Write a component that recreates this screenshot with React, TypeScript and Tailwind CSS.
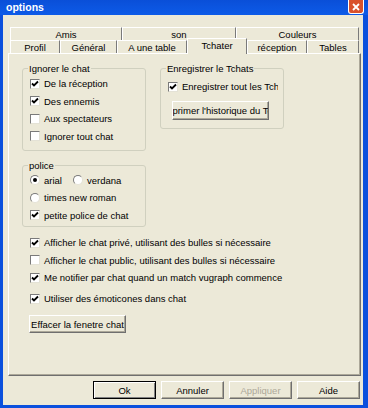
import React from "react";

const FONT = { fontFamily: '"Liberation Sans", Arial, sans-serif' };

function Check({ on }: { on?: boolean }) {
  return (
    <span className="w-[10px] h-[10px] shrink-0 bg-white border border-t-[#7a7a7a] border-l-[#7a7a7a] border-r-[#e4e2d6] border-b-[#e4e2d6] flex items-center justify-center">
      {on && (
        <svg width="8" height="8" viewBox="0 0 8 8">
          <path d="M1 3.5 L3 5.5 L7 1.5" stroke="#000" strokeWidth="1.8" fill="none" />
        </svg>
      )}
    </span>
  );
}

function Radio({ on }: { on?: boolean }) {
  return (
    <span className="w-[10px] h-[10px] shrink-0 rounded-full bg-white border border-t-[#7a7a7a] border-l-[#7a7a7a] border-r-[#e4e2d6] border-b-[#e4e2d6] flex items-center justify-center">
      {on && <span className="w-[4px] h-[4px] rounded-full bg-black" />}
    </span>
  );
}

function Row({ children, box }: { children: React.ReactNode; box: React.ReactNode }) {
  return (
    <div className="h-[17.5px] flex items-center gap-[4px] whitespace-nowrap">
      {box}
      <span>{children}</span>
    </div>
  );
}

function Group({
  title,
  className,
  children,
}: {
  title: string;
  className: string;
  children: React.ReactNode;
}) {
  return (
    <div className={"relative border border-[#d0d0bf] rounded-[3px] " + className}>
      <span className="absolute left-[5px] -top-[6px] px-[1px] bg-[#ece9d8] leading-[11px]">{title}</span>
      {children}
    </div>
  );
}

function Btn({
  children,
  className = "",
  def,
  disabled,
}: {
  children: React.ReactNode;
  className?: string;
  def?: boolean;
  disabled?: boolean;
}) {
  return (
    <div
      className={
        "flex items-center justify-center overflow-hidden whitespace-nowrap bg-[#ece9d8] " +
        (def
          ? "border border-black shadow-[inset_1px_1px_0_#fff,inset_-1px_-1px_0_#808080] "
          : "border border-t-white border-l-white border-r-[#6f6f6f] border-b-[#6f6f6f] shadow-[inset_-1px_-1px_0_#aca899] ") +
        (disabled ? "text-[#aca899] " : "") +
        className
      }
    >
      {children}
    </div>
  );
}

function Tab({ label, w, sel }: { label: string; w: string; sel?: boolean }) {
  return (
    <div
      className={
        "shrink-0 flex items-center justify-center border-t border-l border-t-white border-l-white border-r border-r-[#7a7a7a] bg-[#ece9d8] " +
        w +
        (sel ? " relative -top-[2px] h-[16px] z-10 pb-[2px]" : " h-[13px]")
      }
    >
      {label}
    </div>
  );
}

export default function App() {
  return (
    <div
      className="w-[368px] h-[408px] bg-[#0b50dd] flex flex-col text-[9.5px] text-black leading-[11px]"
      style={FONT}
    >
      <div className="h-[15px] flex items-start justify-between pl-[6px] pr-[4px] bg-[linear-gradient(#0a4fd8,#0d5be8)]">
        <span className="text-white font-bold text-[10.5px] leading-[13px] mt-[1px]">options</span>
        <div className="w-[16px] h-[14px] bg-[#d9522c] border border-t-0 border-white rounded-b-[3px] flex items-center justify-center">
          <svg width="8" height="8" viewBox="0 0 8 8">
            <path d="M1 1 L7 7 M7 1 L1 7" stroke="#fff" strokeWidth="1.8" />
          </svg>
        </div>
      </div>
      <div className="flex-1 ml-[3px] mr-[5px] mb-[3px] bg-[#ece9d8] flex flex-col">
        <div className="pl-[7px] mt-[12px] flex flex-col">
          <div className="flex h-[13px]">
            <Tab label="Amis" w="w-[112px]" />
            <Tab label="son" w="w-[114px]" />
            <Tab label="Couleurs" w="w-[123px]" />
          </div>
          <div className="flex items-start h-[13px]">
            <Tab label="Profil" w="w-[50px]" />
            <Tab label="Général" w="w-[57px]" />
            <Tab label="A une table" w="w-[70px]" />
            <Tab label="Tchater" w="w-[60px]" sel />
            <Tab label="réception" w="w-[60px]" />
            <Tab label="Tables" w="w-[52px]" />
          </div>
        </div>
        <div className="ml-[5px] w-[353px] h-[323px] border border-t-white border-l-white border-r-[#6f6f6f] border-b-[#6f6f6f] shadow-[inset_-1px_-1px_0_#aca899] pl-[13px] pt-[14px] flex flex-col">
          <div className="flex items-start">
            <Group title="Ignorer le chat" className="w-[124px] h-[83px] pt-[6px] pl-[7px]">
              <Row box={<Check on />}>De la réception</Row>
              <Row box={<Check on />}>Des ennemis</Row>
              <Row box={<Check />}>Aux spectateurs</Row>
              <Row box={<Check />}>Ignorer tout chat</Row>
            </Group>
            <Group title="Enregistrer le Tchats" className="ml-[14px] w-[124px] h-[61px] pt-[8.75px] pl-[7px]">
              <div className="w-[110px] overflow-hidden">
                <Row box={<Check on />}>Enregistrer tout les Tchats</Row>
              </div>
              <Btn className="ml-[4px] mt-[5.75px] w-[97px] h-[19px]">Supprimer l'historique du Tchat</Btn>
            </Group>
          </div>
          <Group title="police" className="mt-[14px] w-[124px] h-[62px] pt-[5.25px] pl-[7px]">
            <div className="flex">
              <div className="w-[43px]">
                <Row box={<Radio on />}>arial</Row>
              </div>
              <Row box={<Radio />}>verdana</Row>
            </div>
            <Row box={<Radio />}>times new roman</Row>
            <Row box={<Check on />}>petite police de chat</Row>
          </Group>
          <div className="pl-[8px] mt-[6.75px] flex flex-col">
            <Row box={<Check on />}>Afficher le chat privé, utilisant des bulles si nécessaire</Row>
            <Row box={<Check />}>Afficher le chat public, utilisant des bulles si nécessaire</Row>
            <Row box={<Check on />}>Me notifier par chat quand un match vugraph commence</Row>
            <div className="mt-[3.8px]">
              <Row box={<Check on />}>Utiliser des émoticones dans chat</Row>
            </div>
          </div>
          <Btn className="ml-[7px] mt-[7.5px] w-[97px] h-[18px]">Effacer la fenetre chat</Btn>
        </div>
        <div className="mt-[5px] flex justify-end gap-[5px] pr-[3px]">
          <Btn def className="w-[63px] h-[18px]">Ok</Btn>
          <Btn className="w-[63px] h-[18px]">Annuler</Btn>
          <Btn disabled className="w-[63px] h-[18px]">Appliquer</Btn>
          <Btn className="w-[63px] h-[18px]">Aide</Btn>
        </div>
      </div>
    </div>
  );
}
